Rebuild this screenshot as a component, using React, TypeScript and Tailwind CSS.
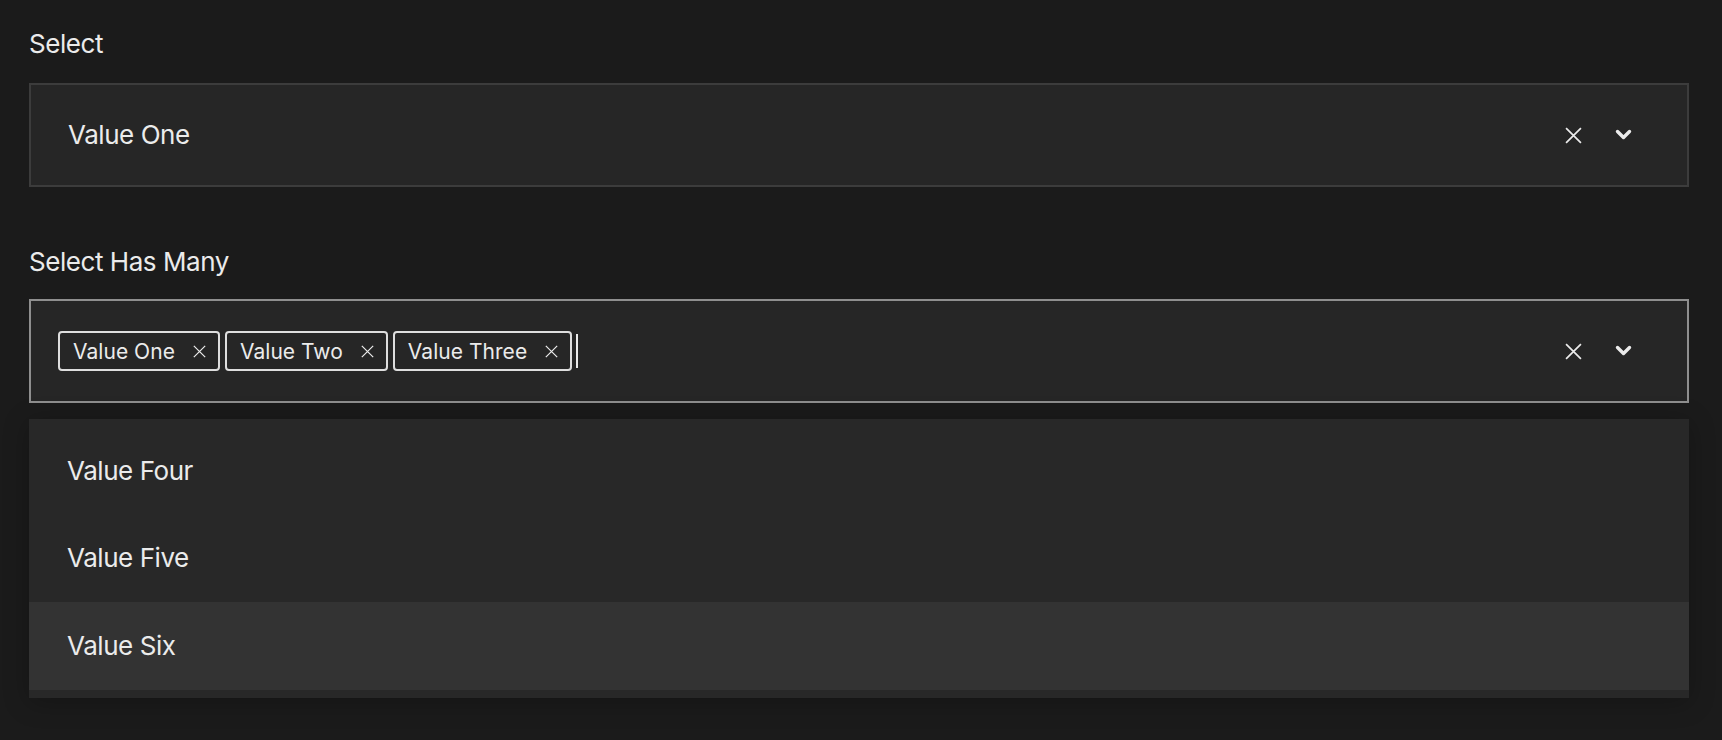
import React from 'react';

const font = { fontFamily: 'Inter, "Noto Sans", sans-serif' };

const XIcon = ({ size = 16, stroke = 1.6 }: { size?: number; stroke?: number }) => (
  <svg width={size} height={size} viewBox="0 0 16 16" fill="none" stroke="currentColor" strokeWidth={stroke}>
    <path d="M1 1L15 15M15 1L1 15" />
  </svg>
);

const Chevron = () => (
  <svg width="17" height="12" viewBox="0 0 17 12" fill="none" stroke="currentColor" strokeWidth="3.4" strokeLinejoin="round" strokeLinecap="round">
    <path d="M2.5 2.5L8.5 8.5L14.5 2.5" />
  </svg>
);

const Controls = () => (
  <div className="flex items-center gap-[33px] pr-[55px] text-[#ebebeb]">
    <XIcon size={17} />
    <Chevron />
  </div>
);

const Chip = ({ label }: { label: string }) => (
  <div className="flex h-[40px] items-center rounded-[4px] border-2 border-[#dedede] pl-[13px] pr-[12px] text-[21px] leading-none tracking-[0.002em] text-[#ebebeb]">
    <span>{label}</span>
    <span className="ml-[18px] flex items-center">
      <XIcon size={13} stroke={1.5} />
    </span>
  </div>
);

export default function App() {
  const options = ['Value Four', 'Value Five', 'Value Six'];

  return (
    <div className="min-h-[740px] bg-[#1b1b1b] pl-[29px] pr-[33px] pt-[28px] tracking-[-0.028em] text-[#ebebeb]" style={font}>
      <div className="mb-[23px] text-[26px] leading-[32px]">Select</div>
      <div className="flex h-[104px] items-center justify-between border-2 border-[#3c3c3c] bg-[#262626]">
        <span className="pl-[37px] text-[26px] leading-[32px]">Value One</span>
        <Controls />
      </div>

      <div className="mb-[21px] mt-[59px] text-[26px] leading-[32px]">Select Has Many</div>
      <div className="flex h-[104px] items-center justify-between border-2 border-[#8f8f8f] bg-[#262626]">
        <div className="flex items-center gap-[5px] pl-[27px]">
          <Chip label="Value One" />
          <Chip label="Value Two" />
          <Chip label="Value Three" />
          <div className="ml-[-1px] h-[34px] w-[2px] bg-[#ebebeb]" />
        </div>
        <Controls />
      </div>

      <div className="mt-[16px] bg-[#282828] py-[8px] shadow-[0_4px_24px_rgba(0,0,0,0.25)]">
        {options.map((o, i) => (
          <div
            key={o}
            className={`flex h-[87.5px] items-center pl-[38px] text-[26px] leading-[32px] ${i === 2 ? 'bg-[#333333]' : ''}`}
          >
            {o}
          </div>
        ))}
      </div>
    </div>
  );
}
